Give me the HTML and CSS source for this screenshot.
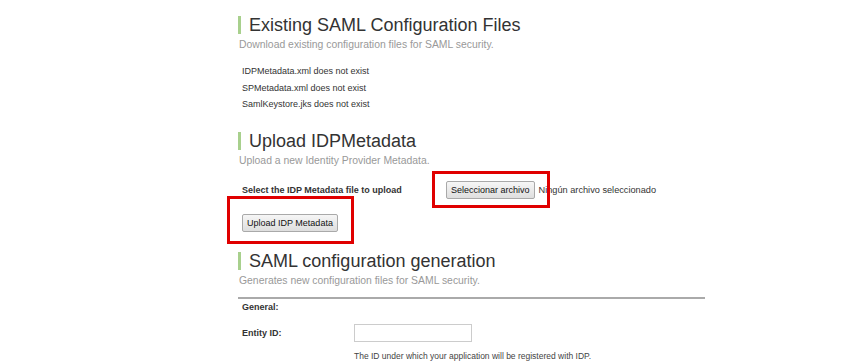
FILE: index.html
```html
<!DOCTYPE html>
<html lang="es">
<head>
    <meta charset="UTF-8">
    <title>SAML Configuration</title>
    <link rel="stylesheet" href="styles.css">
</head>
<body>
    <div class="content">
        <div class="section">
            <h2 class="title">Existing SAML Configuration Files</h2>
            <p class="subtitle">Download existing configuration files for SAML security.</p>
            <ul class="files">
                <li>IDPMetadata.xml does not exist</li>
                <li>SPMetadata.xml does not exist</li>
                <li>SamlKeystore.jks does not exist</li>
            </ul>
        </div>

        <div class="section">
            <h2 class="title">Upload IDPMetadata</h2>
            <p class="subtitle">Upload a new Identity Provider Metadata.</p>
            <div class="upload-row">
                <label class="upload-label">Select the IDP Metadata file to upload</label>
                <span class="file-input">
                    <span class="highlight hl-file"></span>
                    <button class="btn" type="button">Seleccionar archivo</button>
                    <span class="file-name">Ningún archivo seleccionado</span>
                </span>
            </div>
            <div class="submit-row">
                <span class="highlight hl-submit"></span>
                <button class="btn" type="button">Upload IDP Metadata</button>
            </div>
        </div>

        <div class="section">
            <h2 class="title">SAML configuration generation</h2>
            <p class="subtitle">Generates new configuration files for SAML security.</p>
            <div class="form">
                <div class="group-title">General:</div>
                <div class="field">
                    <label class="field-label">Entity ID:</label>
                    <input class="text-input" type="text">
                </div>
                <div class="help">The ID under which your application will be registered with IDP.</div>
            </div>
        </div>
    </div>
</body>
</html>
```

FILE: styles.css
```css
body {
    margin: 0;
    background: #fff;
    font-family: "Liberation Sans", Arial, sans-serif;
    color: #222;
}
.content {
    width: 467px;
    margin-left: 238px;
    padding-top: 16px;
}
.title {
    margin: 0;
    border-left: 3px solid #a8d08d;
    padding-left: 8px;
    font-size: 18px;
    font-weight: normal;
    line-height: 18px;
    color: #333;
}
.subtitle {
    margin: 5px 0 0 1px;
    font-size: 10.4px;
    line-height: 12px;
    color: #999;
}
.files {
    list-style: none;
    margin: 12px 0 0 4px;
    padding: 0;
    font-size: 9px;
    line-height: 16.5px;
    color: #333;
}
.section + .section { margin-top: 19px; }
.section:last-child { margin-top: 22px; }
.upload-row {
    display: flex;
    align-items: center;
    margin-top: 14px;
    padding-left: 4px;
    font-size: 9px;
}
.upload-label {
    width: 204px;
    font-weight: bold;
    color: #333;
}
.file-input {
    position: relative;
    display: flex;
    align-items: center;
    white-space: nowrap;
}
.file-name {
    margin-left: 4px;
    color: #333;
    font-size: 9.2px;
}
.highlight {
    position: absolute;
    border: 3px solid #e00000;
    box-sizing: border-box;
}
.hl-file {
    left: -14px;
    top: -10px;
    width: 118px;
    height: 37px;
}
.btn {
    font-family: "Liberation Sans", Arial, sans-serif;
    font-size: 9px;
    color: #111;
    background: linear-gradient(#f6f6f6, #dedede);
    border: 1px solid #a9a9a9;
    border-radius: 2px;
    padding: 0 4px;
    height: 18px;
}
.submit-row {
    position: relative;
    margin: 13px 0 0 4px;
    width: 100px;
    height: 18px;
}
.hl-submit {
    left: -15px;
    top: -16px;
    width: 127px;
    height: 48px;
}
.form {
    margin-top: 10px;
    border-top: 2px solid #aaa;
    font-size: 9px;
    color: #333;
}
.group-title {
    font-weight: bold;
    line-height: 12px;
    padding: 2px 0 0 4px;
}
.field {
    display: flex;
    align-items: center;
    margin-top: 11px;
    padding-left: 4px;
}
.field-label {
    width: 112px;
    font-weight: bold;
}
.text-input {
    width: 118px;
    height: 18px;
    box-sizing: border-box;
    border: 1px solid #ccc;
    padding: 0;
}
.help {
    margin: 9px 0 0 116px;
    font-size: 8.5px;
    line-height: 10px;
    color: #444;
}
```
